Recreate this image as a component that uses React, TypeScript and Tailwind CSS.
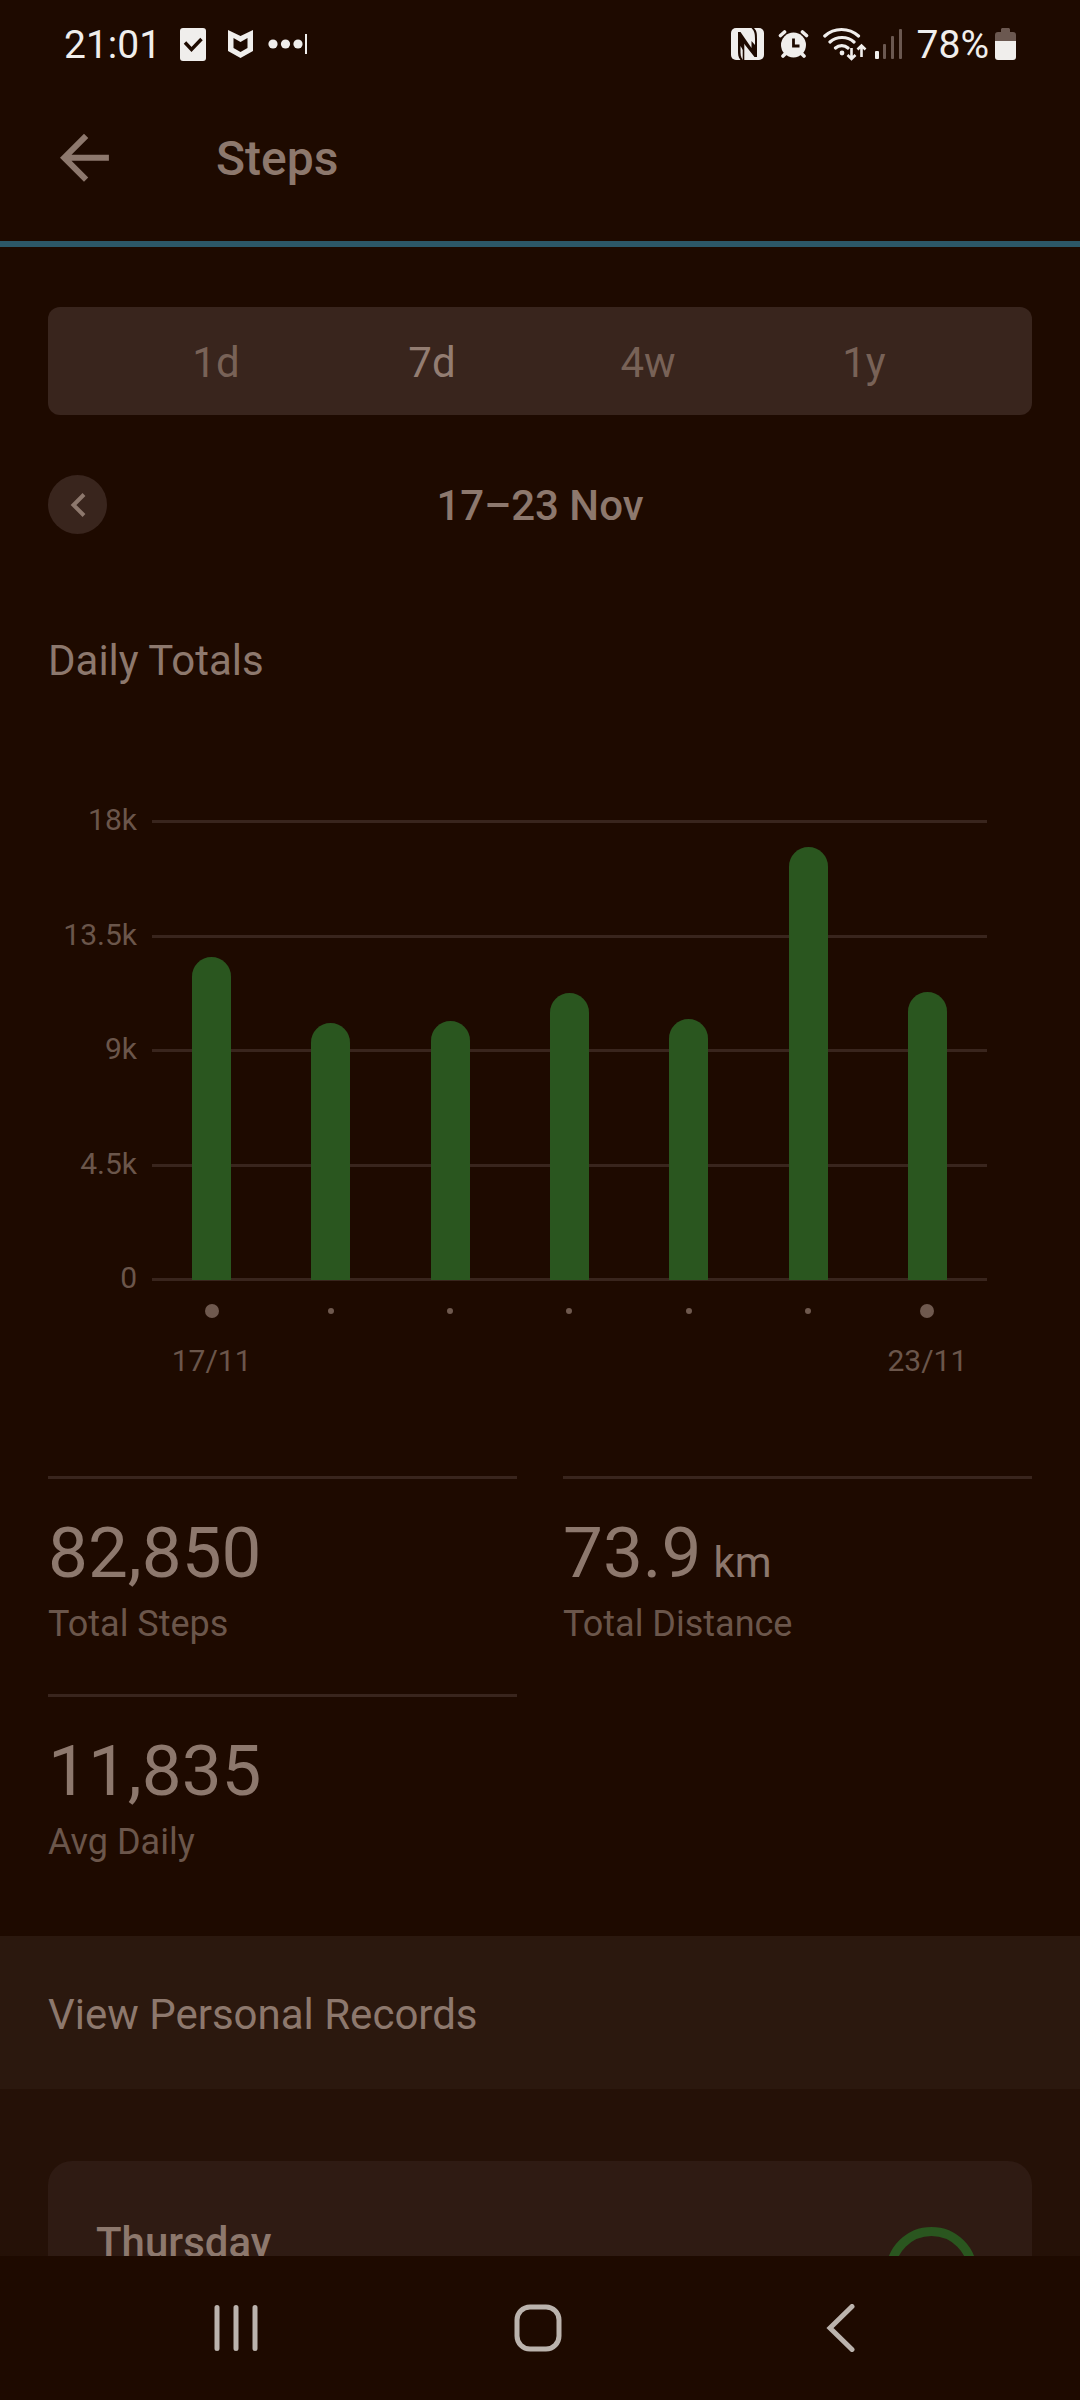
import type { ReactNode } from "react";

const DAYS = [
  { label: "17/11", steps: 12694 },
  { label: "18/11", steps: 10100 },
  { label: "19/11", steps: 10180 },
  { label: "20/11", steps: 11280 },
  { label: "21/11", steps: 10260 },
  { label: "22/11", steps: 17016 },
  { label: "23/11", steps: 11320 },
];
const MAX_STEPS = 18000;
const TICKS = ["18k", "13.5k", "9k", "4.5k", "0"];
const RANGES = ["1d", "7d", "4w", "1y"];

function NfcIcon() {
  return (
    <svg width="33" height="32" viewBox="0 0 33 32" aria-label="NFC">
      <rect width="33" height="32" rx="5" fill="#f0eeec" />
      <path d="M7 4h2.500L20.500 20v-7L24 17V11c0-5-.500-8-3.500-11h2.500c3 3 3 6 3 11v18h-2.500L12.500 15v8L9.500 18v4c0 4 0 7 2.500 10H9.500C7 29 7 26 7 22z" fill="#1e0a00" />
      <path d="M12.500 15v17" stroke="#1e0a00" strokeWidth="1.6" />
    </svg>
  );
}

function AlarmIcon() {
  return (
    <svg width="31" height="30" viewBox="0 0 31 30" aria-label="Alarm">
      <g stroke="#f0eeec" strokeWidth="3.6" strokeLinecap="round">
        <path d="M2.500 6.500l4-3.500M28.500 6.500l-4-3.500M5 27l4-4M26 27l-4-4" />
      </g>
      <circle cx="15.500" cy="16" r="12.500" fill="#f0eeec" />
      <path d="M15.500 9.500v7.500h6" fill="none" stroke="#1e0a00" strokeWidth="2.8" />
    </svg>
  );
}

function WifiIcon() {
  return (
    <svg width="44" height="34" viewBox="0 0 44 34" aria-label="Wi-Fi">
      <g fill="none" stroke="#f0eeec" strokeWidth="3.2" strokeLinecap="round">
        <path d="M1.800 9C11 .300 26 .300 35.500 9M7 15c6.500-6 17.500-6 24 0M12.500 21c3.500-3.300 9-3.300 12.500 0" />
      </g>
      <circle cx="19" cy="26" r="2.4" fill="#f0eeec" />
      <path d="M28.500 21v11M24.500 28l4 4 4-4M38.500 30V18.500M34.500 22.500l4-4 4 4" fill="none" stroke="#f0eeec" strokeWidth="2.6" />
    </svg>
  );
}

function SignalIcon() {
  return (
    <svg width="28" height="30" viewBox="0 0 28 30" aria-label="Signal">
      <rect x="0" y="22" width="4" height="8" rx="1" fill="#f0eeec" />
      <g fill="#6b5850">
        <rect x="8" y="15" width="3" height="15" rx="1" />
        <rect x="16" y="7" width="3" height="23" rx="1" />
        <rect x="24" y="0" width="3" height="30" rx="1" />
      </g>
    </svg>
  );
}

function BatteryIcon() {
  return (
    <svg width="21" height="32" viewBox="0 0 21 32" aria-label="Battery">
      <path d="M6 4V1.500C6 .700 6.700 0 7.500 0h6c.800 0 1.500.700 1.500 1.500V4h3a3 3 0 0 1 3 3v6H0V7a3 3 0 0 1 3-3z" fill="#6b5850" />
      <path d="M0 13h21v16a3 3 0 0 1-3 3H3a3 3 0 0 1-3-3z" fill="#f0eeec" />
    </svg>
  );
}

function StatusBar() {
  return (
    <div className="flex h-[76px] shrink-0 items-center justify-between px-16 pt-3 text-[39px] leading-none text-[#f0eeec]">
      <div className="flex items-center">
        <span className="pt-0.5">21:01</span>
        <svg className="ml-[19px]" width="26" height="33" viewBox="0 0 26 33" aria-label="Task done">
          <rect width="26" height="33" rx="3" fill="#f0eeec" />
          <path d="M5 14.500l6.500 7L21.500 11" fill="none" stroke="#1e0a00" strokeWidth="3.4" />
        </svg>
        <svg className="ml-[22px]" width="25" height="28" viewBox="0 0 25 28" aria-label="Security">
          <path d="M0 0l12.500 6L25 0v21l-12.500 7L0 21zM5.500 8v10l7 4 7-4V8l-7 4z" fill="#f0eeec" fillRule="evenodd" />
        </svg>
        <svg className="ml-[15px]" width="40" height="20" viewBox="0 0 40 20" aria-label="More notifications">
          <g fill="#f0eeec">
            <circle cx="5" cy="10" r="4.6" />
            <circle cx="17.500" cy="10" r="4.6" />
            <circle cx="30" cy="10" r="4.6" />
            <rect x="37" y="0" width="2" height="20" />
          </g>
        </svg>
      </div>
      <div className="flex items-center">
        <NfcIcon />
        <span className="ml-3.5"><AlarmIcon /></span>
        <span className="ml-3.5"><WifiIcon /></span>
        <span className="ml-2"><SignalIcon /></span>
        <span className="ml-3.5 pt-0.5">78%</span>
        <span className="ml-1.5"><BatteryIcon /></span>
      </div>
    </div>
  );
}

function Header() {
  return (
    <header className="flex h-[171px] shrink-0 items-center border-b-[6px] border-[#2c5868] px-12">
      <button type="button" aria-label="Back">
        <svg width="72" height="72" viewBox="0 0.4 24 24" fill="#8d786d">
          <path d="M20.300 11H7.830l5.590-5.590L12 4l-8 8 8 8 1.410-1.410L7.830 13H20.300z" />
        </svg>
      </button>
      <h1 className="ml-24 text-[48px] leading-14 font-medium">Steps</h1>
    </header>
  );
}

function StepsChart() {
  return (
    <div className="mt-[117px] flex pr-[45px]">
      <div className="flex h-[494px] w-[89px] shrink-0 flex-col justify-between text-right text-[30px] leading-9 text-[#6b564b]">
        {TICKS.map((tick) => (
          <span key={tick}>{tick}</span>
        ))}
      </div>
      <div className="ml-[15px] flex-1 pt-[18px]">
        <div className="relative flex h-[461px] flex-col justify-between">
          {TICKS.map((tick) => (
            <div key={tick} className="h-[3px] bg-[#39251d]" />
          ))}
          {/* bars sit over the grid lines, with their feet on the zero line */}
          <div className="absolute inset-x-0 top-0.5 bottom-px grid grid-cols-7 items-end justify-items-center">
            {DAYS.map((day) => (
              <div
                key={day.label}
                className="w-[39px] rounded-t-full bg-[#2a561f]"
                style={{ height: `${(day.steps / MAX_STEPS) * 100}%` }}
              />
            ))}
          </div>
        </div>
        <div className="mt-[22px] grid grid-cols-7 justify-items-center text-[30px] leading-9 text-[#6b564b]">
          {DAYS.map((day, i) => {
            const edge = i === 0 || i === DAYS.length - 1;
            return (
              <div key={day.label} className="flex flex-col items-center">
                <div className="flex h-4 items-center">
                  <div className={edge ? "size-3.5 rounded-full bg-[#6f594e]" : "size-1.5 rounded-full bg-[#6f594e]"} />
                </div>
                {edge && <span className="mt-6">{day.label}</span>}
              </div>
            );
          })}
        </div>
      </div>
    </div>
  );
}

interface StatProps {
  value: string;
  unit?: string;
  label: string;
}

function Stat({ value, unit, label }: StatProps) {
  return (
    <div className="border-t-[3px] border-[#39251d] pt-[34px]">
      <p className="text-[71px] leading-20">
        {value}
        {unit && <span className="ml-3 text-[42px] leading-none">{unit}</span>}
      </p>
      <p className="mt-[9px] text-[36px] leading-11 text-[#6b564b]">{label}</p>
    </div>
  );
}

function NavButton({ label, children }: { label: string; children: ReactNode }) {
  return (
    <button type="button" aria-label={label} className="flex items-center justify-center">
      <svg width="48" height="48" viewBox="0 0 48 48" fill="none" stroke="#bbb3ad" strokeWidth="5" strokeLinecap="round">
        {children}
      </svg>
    </button>
  );
}

export default function App() {
  return (
    <div className="flex h-screen flex-col bg-[#1e0a00] font-[Roboto,sans-serif] text-[42px] leading-12 text-[#8d786d]">
      <StatusBar />
      <Header />
      <main className="min-h-0 flex-1 overflow-y-auto [scrollbar-width:none]">
        <section className="px-12 pt-15 pb-18">
          <div className="grid h-[108px] grid-cols-4 rounded-xl bg-[#39251d] px-15">
            {RANGES.map((range) => (
              <button
                key={range}
                type="button"
                aria-pressed={range === "7d"}
                className="pt-1 text-[#786257] aria-pressed:text-[#937d72]"
              >
                {range}
              </button>
            ))}
          </div>

          <div className="mt-15 grid grid-cols-[59px_1fr_59px] items-center">
            <button type="button" aria-label="Previous week" className="flex size-[59px] items-center justify-center rounded-full bg-[#39251d]">
              <svg width="24" height="24" viewBox="0 0 24 24" fill="none" stroke="#8d786d" strokeWidth="4">
                <path d="M18 1.500L7.500 12 18 22.500" />
              </svg>
            </button>
            <h2 className="pt-0.5 text-center font-medium">17–23 Nov</h2>
          </div>

          <h3 className="mt-[103px]">Daily Totals</h3>
          <StepsChart />

          <div className="mt-[97px] grid grid-cols-2 gap-x-[46px] gap-y-12">
            <Stat value="82,850" label="Total Steps" />
            <Stat value="73.9" unit="km" label="Total Distance" />
            <Stat value="11,835" label="Avg Daily" />
          </div>
        </section>

        <button type="button" className="block h-[153px] w-full bg-[#2b180e] px-12 pt-1 text-left">
          View Personal Records
        </button>

        <section className="bg-[#251107] px-12 pt-18">
          <div className="flex min-h-40 items-start justify-between rounded-t-3xl bg-[#2f1b13] pt-[58px] pr-[55px] pl-12">
            <h3 className="font-medium">Thursday</h3>
            <div className="mt-2 size-[91px] rounded-full border-[9px] border-[#2a561f]" />
          </div>
        </section>
      </main>

      <nav className="grid h-36 shrink-0 grid-cols-3 bg-[#1e0a00] pr-[89px] pl-[85px]">
        <NavButton label="Recent apps">
          <path d="M5 3.500v41M24 3.500v41M43 3.500v41" />
        </NavButton>
        <NavButton label="Home">
          <rect x="3" y="3" width="42" height="42" rx="13" />
        </NavButton>
        <NavButton label="Back">
          <path d="M36 2.500L14 24l22 21.500" />
        </NavButton>
      </nav>
    </div>
  );
}
